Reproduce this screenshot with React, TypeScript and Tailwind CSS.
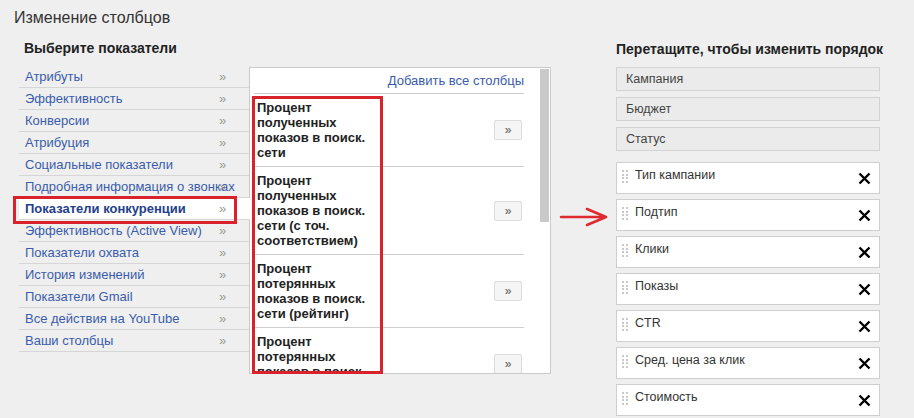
import React from 'react';

const categories = [
  'Атрибуты',
  'Эффективность',
  'Конверсии',
  'Атрибуция',
  'Социальные показатели',
  'Подробная информация о звонках',
  'Показатели конкуренции',
  'Эффективность (Active View)',
  'Показатели охвата',
  'История изменений',
  'Показатели Gmail',
  'Все действия на YouTube',
  'Ваши столбцы',
];

const metrics = [
  'Процент полученных показов в поиск. сети',
  'Процент полученных показов в поиск. сети (с точ. соответствием)',
  'Процент потерянных показов в поиск. сети (рейтинг)',
  'Процент потерянных показов в поиск. сети (бюджет)',
];

const fixedColumns = ['Кампания', 'Бюджет', 'Статус'];
const movableColumns = ['Тип кампании', 'Подтип', 'Клики', 'Показы', 'CTR', 'Сред. цена за клик', 'Стоимость'];

function Grip() {
  return (
    <div className="grid grid-cols-2 gap-x-[2px] gap-y-[1.5px] w-[6px]">
      {Array.from({ length: 8 }).map((_, i) => (
        <span key={i} className="block w-[2px] h-[2px] bg-[#c9c9c9]" />
      ))}
    </div>
  );
}

export default function App() {
  const selected = 'Показатели конкуренции';

  return (
    <div className="relative w-[914px] h-[418px] overflow-hidden bg-[#efefef] font-['Liberation_Sans',Arial,sans-serif] text-[#333]">
      <h1 className="pl-[14px] pt-[8px] text-[16px] leading-[20px] text-[#333]">Изменение столбцов</h1>

      <div className="flex">
        {/* выбор показателей */}
        <div className="ml-[19px] w-[532px]">
          <h2 className="mt-[12px] pl-[5px] text-[14px] leading-[16px] font-bold text-[#222]">Выберите показатели</h2>
          <div className="flex mt-[10px]">
            <ul className="w-[230px]">
              {categories.map((c) =>
                c === selected ? (
                  <li
                    key={c}
                    className="relative z-10 flex items-center h-[22px] w-[231px] pl-[6px] bg-white border-b border-[#d6d6d6] text-[13px] font-bold text-[#24408a]"
                  >
                    <span className="w-[194px] whitespace-nowrap">{c}</span>
                    <span className="font-normal text-[#999]">»</span>
                    <span className="absolute left-[-6px] top-[-2px] w-[224px] h-[28px] border-[3px] border-[#d8232c]" />
                  </li>
                ) : (
                  <li key={c} className="flex items-center h-[22px] pl-[6px] border-b border-[#d6d6d6] text-[13px] text-[#3a5dab]">
                    <span className="w-[194px] whitespace-nowrap">{c}</span>
                    <span className="text-[#999]">»</span>
                  </li>
                )
              )}
            </ul>

            <div className="relative flex mt-[1px] w-[302px] h-[307px] bg-white border border-[#cacaca]">
              <div className="w-[290px] h-full overflow-hidden pl-[4px] pr-[16px]">
                <div className="h-[26px] flex items-center justify-end border-b border-[#cfcfcf] text-[13px] text-[#3a5dab]">
                  Добавить все столбцы
                </div>
                {metrics.map((m) => (
                  <div key={m} className="flex items-center justify-between py-[6px] pl-[3px] border-b border-[#cfcfcf]">
                    <span className="w-[124px] text-[13px] leading-[15px] font-bold text-[#222]">{m}</span>
                    <button className="mr-[2px] w-[28px] h-[20px] bg-[#f5f5f5] border border-[#dcdcdc] rounded-[2px] text-[12px] leading-[16px] text-[#555]">
                      »
                    </button>
                  </div>
                ))}
              </div>
              <div className="w-[10px] h-full bg-white pt-[1px]">
                <div className="w-[9px] h-[153px] bg-[#c9c9c9]" />
              </div>
              <span className="absolute left-[2px] top-[28px] w-[131px] h-[278px] border-[3px] border-[#d8232c]" />
            </div>
          </div>
        </div>

        {/* порядок столбцов */}
        <div className="ml-[65px] w-[264px]">
          <h2 className="mt-[13px] text-[14px] leading-[16px] font-bold text-[#222] whitespace-nowrap">
            Перетащите, чтобы изменить порядок
          </h2>
          <div className="mt-[10px] flex flex-col gap-[6px]">
            {fixedColumns.map((c) => (
              <div key={c} className="h-[24px] flex items-center pl-[9px] bg-[#ebebeb] border border-[#d2d2d2] text-[12.5px] text-[#444]">
                {c}
              </div>
            ))}
          </div>
          <div className="mt-[11px] flex flex-col gap-[5px]">
            {movableColumns.map((c) => (
              <div key={c} className="h-[32px] shrink-0 flex items-center pl-[5px] pr-[8px] bg-white border border-[#cfcfcf]">
                <div className="mb-[3px]">
                  <Grip />
                </div>
                <span className="ml-[7px] mb-[5px] flex-1 text-[12.5px] text-[#333]">{c}</span>
                <svg width="13" height="13" viewBox="0 0 13 13" className="shrink-0">
                  <path d="M1.5 1.5 L11.5 11.5 M11.5 1.5 L1.5 11.5" stroke="#000" strokeWidth="2.4" />
                </svg>
              </div>
            ))}
          </div>
        </div>
      </div>

      {/* стрелка-указатель */}
      <svg className="absolute left-[558px] top-[206px]" width="52" height="22" viewBox="0 0 52 22">
        <path d="M3 11 H47 M29 3 L48 11 L29 19" fill="none" stroke="#df2a30" strokeWidth="2.6" strokeLinecap="round" strokeLinejoin="round" />
      </svg>
    </div>
  );
}
